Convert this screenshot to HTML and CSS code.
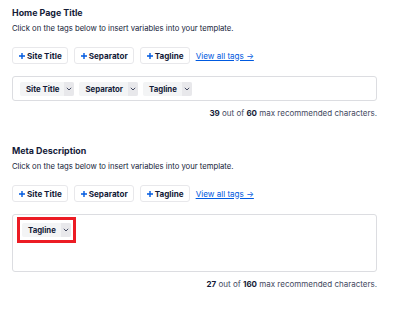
FILE: index.html
```html
<!DOCTYPE html>
<html lang="en">
  <head>
    <meta charset="UTF-8" />
    <meta name="viewport" content="width=device-width, initial-scale=1.0" />
    <link rel="stylesheet" href="styles.css">
  </head>
  <body>
    <div class="section">
      <h3 class="section-title">Home Page Title</h3>
      <p class="section-desc">Click on the tags below to insert variables into your template.</p>
      <div class="tag-buttons">
        <button class="tag-button"><svg class="plus" width="6" height="6" viewBox="0 0 6 6"><path d="M3 0 V6 M0 3 H6" stroke="#005ae0" stroke-width="1.4"/></svg>Site Title</button>
        <button class="tag-button"><svg class="plus" width="6" height="6" viewBox="0 0 6 6"><path d="M3 0 V6 M0 3 H6" stroke="#005ae0" stroke-width="1.4"/></svg>Separator</button>
        <button class="tag-button"><svg class="plus" width="6" height="6" viewBox="0 0 6 6"><path d="M3 0 V6 M0 3 H6" stroke="#005ae0" stroke-width="1.4"/></svg>Tagline</button>
        <a class="view-all" href="#">View all tags &rarr;</a>
      </div>
      <div class="field">
        <span class="tag">
          <span class="tag-name">Site Title</span>
          <span class="tag-toggle">
            <svg width="6" height="4" viewBox="0 0 6 4"><path d="M0.8 0.8 L3 3 L5.2 0.8" fill="none" stroke="#434960" stroke-width="1"/></svg>
          </span>
        </span>
        <span class="tag">
          <span class="tag-name">Separator</span>
          <span class="tag-toggle">
            <svg width="6" height="4" viewBox="0 0 6 4"><path d="M0.8 0.8 L3 3 L5.2 0.8" fill="none" stroke="#434960" stroke-width="1"/></svg>
          </span>
        </span>
        <span class="tag">
          <span class="tag-name">Tagline</span>
          <span class="tag-toggle">
            <svg width="6" height="4" viewBox="0 0 6 4"><path d="M0.8 0.8 L3 3 L5.2 0.8" fill="none" stroke="#434960" stroke-width="1"/></svg>
          </span>
        </span>
      </div>
      <div class="counter"><strong>39</strong> out of <strong>60</strong> max recommended characters.</div>
    </div>

    <div class="section">
      <h3 class="section-title">Meta Description</h3>
      <p class="section-desc">Click on the tags below to insert variables into your template.</p>
      <div class="tag-buttons">
        <button class="tag-button"><svg class="plus" width="6" height="6" viewBox="0 0 6 6"><path d="M3 0 V6 M0 3 H6" stroke="#005ae0" stroke-width="1.4"/></svg>Site Title</button>
        <button class="tag-button"><svg class="plus" width="6" height="6" viewBox="0 0 6 6"><path d="M3 0 V6 M0 3 H6" stroke="#005ae0" stroke-width="1.4"/></svg>Separator</button>
        <button class="tag-button"><svg class="plus" width="6" height="6" viewBox="0 0 6 6"><path d="M3 0 V6 M0 3 H6" stroke="#005ae0" stroke-width="1.4"/></svg>Tagline</button>
        <a class="view-all" href="#">View all tags &rarr;</a>
      </div>
      <div class="field field-textarea">
        <span class="highlight">
          <span class="tag">
            <span class="tag-name">Tagline</span>
            <span class="tag-toggle">
              <svg width="6" height="4" viewBox="0 0 6 4"><path d="M0.8 0.8 L3 3 L5.2 0.8" fill="none" stroke="#434960" stroke-width="1"/></svg>
            </span>
          </span>
        </span>
      </div>
      <div class="counter"><strong>27</strong> out of <strong>160</strong> max recommended characters.</div>
    </div>
  </body>
</html>
```

FILE: styles.css
```css
body {
  margin: 0;
  padding: 6px 24px 0 12px;
  font-family: Inter, "Noto Sans", sans-serif;
  color: #141b38;
  background: #ffffff;
  display: flex;
  flex-direction: column;
  gap: 24px;
}

.section {
  display: flex;
  flex-direction: column;
}

.section-title {
  margin: 0;
  font-size: 8.9px;
  line-height: 14px;
  font-weight: 700;
}

.section-desc {
  margin: 2px 0 0;
  font-size: 7.7px;
  line-height: 14px;
}

.tag-buttons {
  display: flex;
  align-items: center;
  gap: 6px;
  margin-top: 11px;
}

.tag-button {
  height: 17px;
  padding: 0 5px 0 6px;
  display: inline-flex;
  align-items: center;
  gap: 2px;
  background: #ffffff;
  border: 1px solid #e8e8eb;
  border-radius: 3px;
  font-family: inherit;
  font-size: 8.1px;
  font-weight: 700;
  color: #141b38;
  cursor: pointer;
}

.plus {
  flex-shrink: 0;
}

.view-all {
  color: #005ae0;
  font-size: 8.1px;
  text-decoration: underline;
}

.field {
  margin-top: 12px;
  padding: 5px 7px 4px;
  border: 1px solid #dcdde1;
  border-radius: 3px;
  display: flex;
  align-items: flex-start;
  gap: 5px;
}

.field-textarea {
  height: 52px;
  padding: 2px 4px;
}

.tag {
  display: inline-flex;
  height: 14px;
  border-radius: 2px;
  overflow: hidden;
  background: #f3f4f5;
}

.tag-name {
  display: flex;
  align-items: center;
  padding: 0 5px 0 6px;
  font-size: 7.8px;
  font-weight: 700;
  color: #141b38;
}

.tag-toggle {
  width: 10px;
  display: flex;
  align-items: center;
  justify-content: center;
  background: #e8e8eb;
}

.highlight {
  display: inline-flex;
  padding: 3px 2px;
  border: 3px solid #ec1c24;
}

.counter {
  margin-top: 5px;
  text-align: right;
  font-size: 8px;
  line-height: 14px;
  color: #434960;
}

.counter strong {
  color: #141b38;
  font-weight: 700;
}
```
